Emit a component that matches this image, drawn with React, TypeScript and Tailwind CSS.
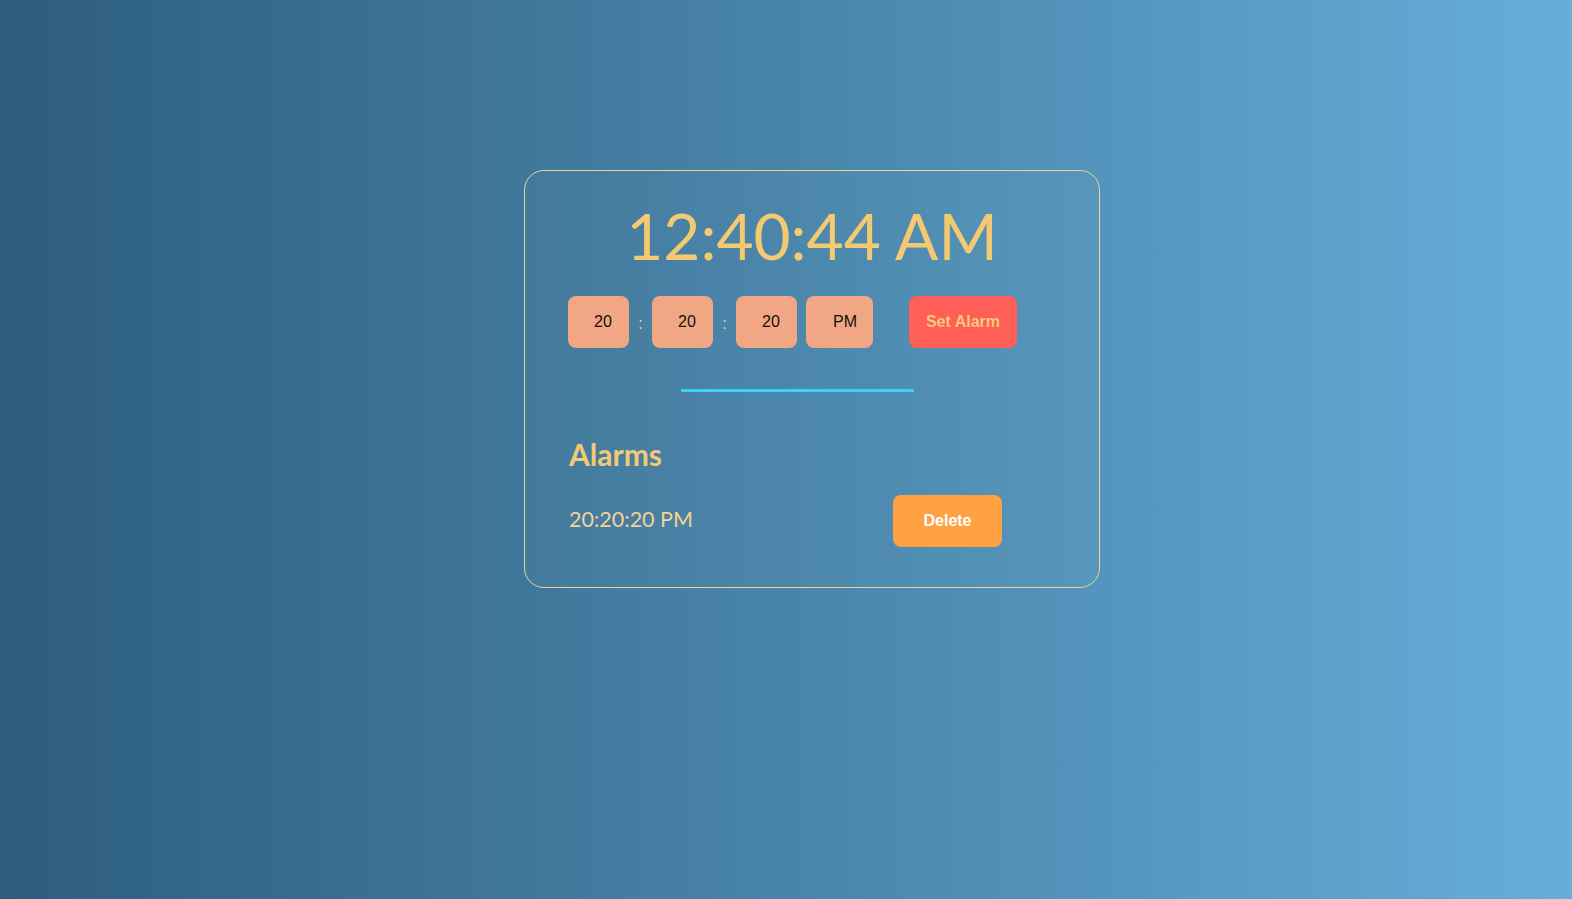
import React from 'react';

const fieldClass =
  'h-[52px] rounded-[8px] bg-[#f1a684] text-[16px] text-[#111] outline-none border-0';

const App: React.FC = () => {
  const alarms = ['20:20:20 PM'];

  return (
    <div className="min-h-screen w-full bg-gradient-to-r from-[#2d5d7d] to-[#66aed9] flex justify-center pt-[170px] pl-[52px] font-['Lato',sans-serif]">
      <div className="w-[576px] h-[418px] rounded-[20px] border border-[#e9d49a] bg-white/[0.02] pt-[33px]">
        {/* current time */}
        <div className="h-[64px] text-center text-[64px] leading-none text-[#f5c972]">
          12:40:44 AM
        </div>

        {/* alarm form */}
        <div className="mt-[28px] pl-[43px] flex items-center font-['Liberation_Sans',sans-serif]">
          <input readOnly value="20" className={`${fieldClass} w-[61px] pl-[26px]`} />
          <span className="w-[23px] text-center text-[16px] text-[#f1d38f] pt-[4px]">:</span>
          <input readOnly value="20" className={`${fieldClass} w-[61px] pl-[26px]`} />
          <span className="w-[23px] text-center text-[16px] text-[#f1d38f] pt-[4px]">:</span>
          <input readOnly value="20" className={`${fieldClass} w-[61px] pl-[26px]`} />
          <input readOnly value="PM" className={`${fieldClass} w-[67px] pl-[27px] ml-[9px]`} />
          <button className="ml-[36px] h-[52px] w-[108px] rounded-[8px] bg-[#ff5f57] text-[16px] font-bold text-[#f9c97c]">
            Set Alarm
          </button>
        </div>

        <div className="mt-[41px] ml-[156px] h-[3px] w-[233px] bg-[#3ad4f2]" />

        {/* alarm list */}
        <div className="mt-[47px] pl-[44px] pr-[97px]">
          <h2 className="text-[30px] leading-none font-bold text-[#f5c972]">Alarms</h2>
          {alarms.map((a) => (
            <div key={a} className="mt-[26px] flex items-center justify-between">
              <span className="text-[21.5px] text-[#f3d393] pb-[4px]">{a}</span>
              <button className="h-[52px] w-[109px] rounded-[8px] bg-[#ffa043] text-[16px] font-bold text-white font-['Liberation_Sans',sans-serif]">
                Delete
              </button>
            </div>
          ))}
        </div>
      </div>
    </div>
  );
};

export default App;
